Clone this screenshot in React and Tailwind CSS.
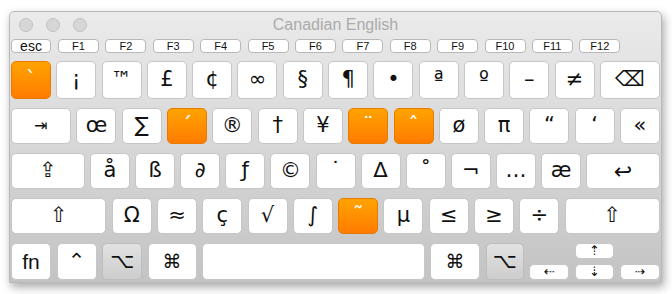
import React from "react";

const font = "font-['DejaVu_Sans',sans-serif]";
const plain = "flex items-center justify-center rounded-[5px] border border-[#c6c6c6] bg-white text-[#111]";
const orange = "flex items-center justify-center rounded-[5px] border border-[#e87a00] bg-gradient-to-b from-[#ffa300] to-[#ff7b00] text-white";
const pressed = "flex items-center justify-center rounded-[5px] border border-[#bdbdbd] bg-gradient-to-b from-[#e2e2e2] to-[#cdcdcd] text-[#111]";

function Key({ label, dead, wide, className = "", size = "text-[21px]" }) {
  const look = dead ? orange : plain;
  return (
    <div className={`${look} ${wide ? "flex-1" : "w-[40px] shrink-0"} ${size} ${className}`}>
      {label}
    </div>
  );
}

const row1 = [["`", 1], ["¡"], ["™"], ["£"], ["¢"], ["∞"], ["§"], ["¶"], ["•"], ["ª"], ["º"], ["–"], ["≠"]];
const row2 = [["œ"], ["∑"], ["´", 1], ["®"], ["†"], ["¥"], ["¨", 1], ["ˆ", 1], ["ø"], ["π"], ["“"], ["‘"], ["«"]];
const row3 = [["å"], ["ß"], ["∂"], ["ƒ"], ["©"], ["˙"], ["∆"], ["˚"], ["¬"], ["…"], ["æ"]];
const row4 = [["Ω"], ["≈"], ["ç"], ["√"], ["∫"], ["˜", 1], ["µ"], ["≤"], ["≥"], ["÷"]];

const fkeys = ["F1", "F2", "F3", "F4", "F5", "F6", "F7", "F8", "F9", "F10", "F11", "F12"];

export default function App() {
  return (
    <div className={`w-[672px] h-[294px] bg-white pl-[9px] pt-[11px] ${font}`}>
      <div className="w-[653px] h-[272px] rounded-t-[5px] border border-[#b9b9b9] bg-gradient-to-b from-[#ebebeb] to-[#c3c3c3] shadow-[2px_4px_10px_rgba(0,0,0,0.35)] flex flex-col px-[1px]">
        {/* title bar */}
        <div className="relative h-[26px] shrink-0 flex items-center">
          <div className="flex gap-[13px] pl-[8px]">
            <span className="w-[14px] h-[14px] rounded-full bg-[#d6d6d6] border border-[#c2c2c2]" />
            <span className="w-[14px] h-[14px] rounded-full bg-[#d6d6d6] border border-[#c2c2c2]" />
            <span className="w-[14px] h-[14px] rounded-full bg-[#d6d6d6] border border-[#c2c2c2]" />
          </div>
          <div className="absolute inset-0 flex items-center justify-center text-[16px] text-[#ababab] font-['Liberation_Sans',sans-serif]">
            Canadian English
          </div>
        </div>

        {/* function row */}
        <div className="flex h-[14px] mt-[1px] shrink-0 font-['Liberation_Sans',sans-serif]">
          <div className="w-[40px] rounded-[4px] border border-[#b8b8b8] bg-white flex items-center justify-center text-[14px] leading-none text-[#111]">
            esc
          </div>
          <div className="flex gap-[6.4px] ml-[7px]">
            {fkeys.map((f) => (
              <div key={f} className="w-[41px] rounded-[4px] border border-[#b8b8b8] bg-white flex items-center justify-center text-[11px] leading-none text-[#111]">
                {f}
              </div>
            ))}
          </div>
        </div>

        {/* main keys */}
        <div className="flex flex-col gap-[9px] mt-[8px]">
          <div className="flex gap-[5.3px] h-[38px]">
            {row1.map(([c, d], i) => (
              <Key key={i} label={c} dead={d} />
            ))}
            <Key label="⌫" wide size="text-[21px]" />
          </div>
          <div className="flex gap-[5.3px] h-[36px]">
            <Key label="⇥" wide size="text-[16px]" />
            {row2.map(([c, d], i) => (
              <Key key={i} label={c} dead={d} />
            ))}
          </div>
          <div className="flex gap-[5.1px] h-[36px]">
            <Key label="⇪" wide size="text-[21px]" />
            {row3.map(([c, d], i) => (
              <Key key={i} label={c} dead={d} />
            ))}
            <Key label="↩" wide size="text-[22px]" />
          </div>
          <div className="flex gap-[5.3px] h-[36px]">
            <Key label="⇧" wide size="text-[21px]" />
            {row4.map(([c, d], i) => (
              <Key key={i} label={c} dead={d} />
            ))}
            <Key label="⇧" wide size="text-[21px]" />
          </div>
          <div className="flex gap-[5.5px] h-[37px]">
            <Key label="fn" className="font-['Liberation_Sans',sans-serif]" size="text-[21px]" />
            <Key label="⌃" size="text-[21px]" />
            <div className={`${pressed} w-[40px] shrink-0 text-[21px]`}>⌥</div>
            <Key label="⌘" className="w-[49px]" size="text-[19px]" />
            <Key label="" wide />
            <Key label="⌘" className="w-[50px]" size="text-[19px]" />
            <div className={`${pressed} w-[38px] shrink-0 text-[21px]`}>⌥</div>
            <div className="w-[131px] shrink-0 flex flex-col gap-[5px]">
              <div className="flex h-[16px] justify-center">
                <div className={`${plain} w-[39px] text-[13px]`}>⇡</div>
              </div>
              <div className="flex h-[16px] gap-[6px]">
                <div className={`${plain} w-[40px] text-[13px]`}>⇠</div>
                <div className={`${plain} w-[39px] text-[13px]`}>⇣</div>
                <div className={`${plain} w-[40px] text-[13px]`}>⇢</div>
              </div>
            </div>
          </div>
        </div>
      </div>
    </div>
  );
}
